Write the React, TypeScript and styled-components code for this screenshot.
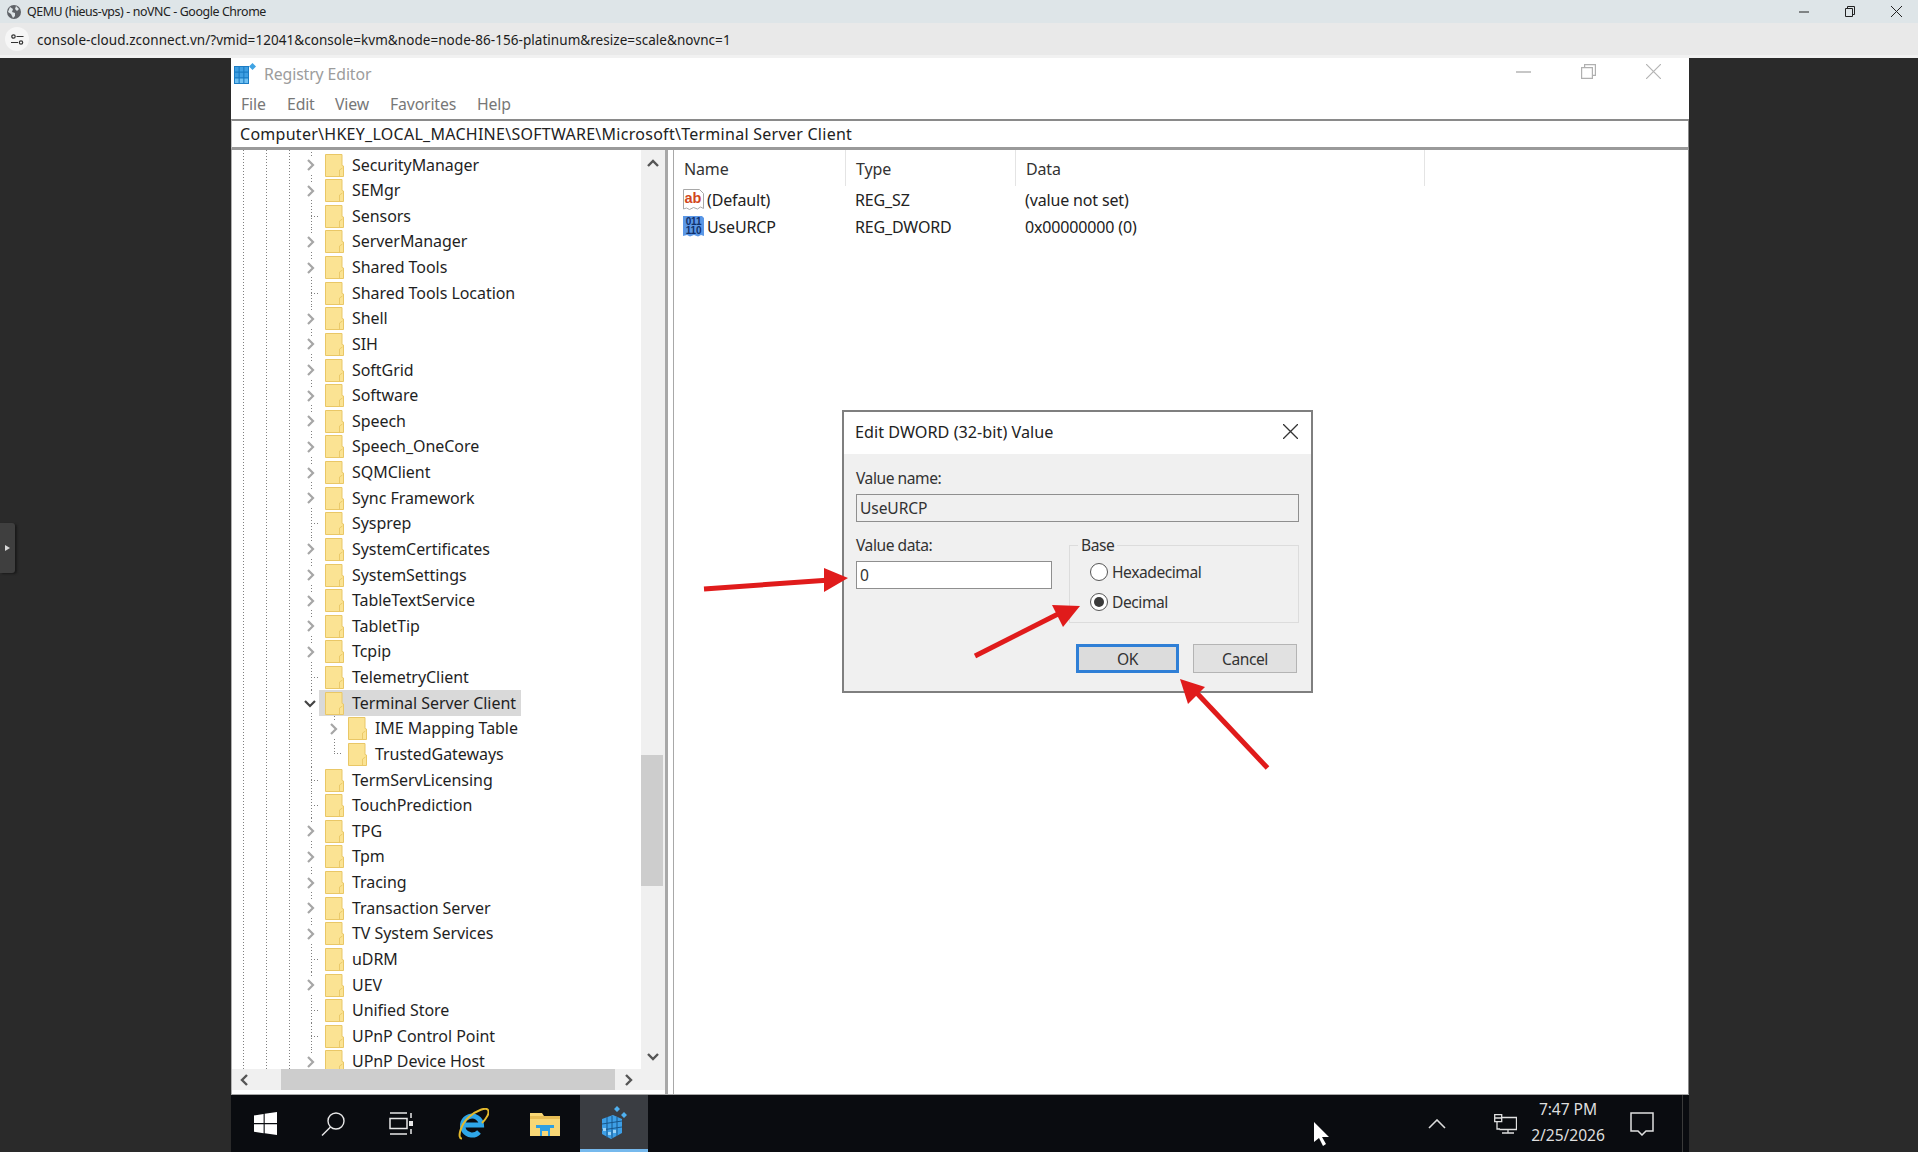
import React from "react";
import styled, { createGlobalStyle } from "styled-components";

const GlobalStyle = createGlobalStyle`
  html, body { margin: 0; padding: 0; background: #2a2a2a; }
  * { box-sizing: border-box; }
  #root { width: 1918px; height: 1152px; }
`;

const UI_FONT = `"Noto Sans", "Open Sans", Arial, sans-serif`;

const Page = styled.div`
  width: 1918px;
  height: 1152px;
  display: flex;
  flex-direction: column;
  overflow: hidden;
  font-family: ${UI_FONT};
  color: #222;
`;

const ChromeTitle = styled.header`
  height: 23px;
  background: #dee5e8;
  display: flex;
  align-items: center;
  padding-left: 7px;
  flex: none;
`;
const ChromeTitleText = styled.span`
  margin-left: 6px;
  font-size: 12.4px;
  letter-spacing: -0.4px;
  color: #222;
  white-space: nowrap;
`;
const ChromeControls = styled.div`
  margin-left: auto;
  margin-right: -1px;
  display: flex;
  align-items: center;
  color: #222;
`;
const ChromeControl = styled.span`
  width: 46px;
  height: 23px;
  display: flex;
  align-items: center;
  justify-content: center;
`;
const ChromeAddress = styled.div`
  height: 35px;
  flex: none;
  background: #e9e9e9;
  border-bottom: 3px solid;
  border-image: linear-gradient(#a9a9a9 0 67%, #f1f1f1 67%) 1;
  display: flex;
  align-items: center;
  padding-left: 5px;
`;
const SiteBadge = styled.span`
  width: 24px;
  height: 24px;
  border-radius: 50%;
  background: #f6f6f6;
  display: flex;
  align-items: center;
  justify-content: center;
  flex: none;
`;
const UrlText = styled.span`
  margin-left: 8px;
  padding-top: 2px;
  font-size: 13.5px;
  letter-spacing: 0.05px;
  color: #1c1c1c;
  white-space: nowrap;
`;

const Desktop = styled.main`
  position: relative;
  flex: 1;
  min-height: 0;
  background: #2a2a2a;
  padding-left: 231px;
`;
const SideHandle = styled.div`
  position: absolute;
  left: 0;
  top: 465px;
  width: 15px;
  height: 50px;
  background: #3f3f3f;
  border-radius: 0 3px 3px 0;
  box-shadow: 2px 1px 2px #1a1a1a;
  display: flex;
  align-items: center;
  justify-content: center;
`;
const HandleArrow = styled.span`
  width: 0;
  height: 0;
  border-left: 5px solid #d8d8d8;
  border-top: 3px solid transparent;
  border-bottom: 3px solid transparent;
`;

const RegWindow = styled.section`
  width: 1458px;
  height: 100%;
  display: flex;
  flex-direction: column;
  background: #fff;
`;
const TitleRow = styled.div`
  height: 31px;
  flex: none;
  display: flex;
  align-items: center;
  padding-left: 3px;
`;
const WindowTitle = styled.span`
  margin-left: 8px;
  font-size: 15.8px;
  letter-spacing: -0.1px;
  color: #9c9c9c;
`;
const WindowControls = styled.div`
  margin-left: auto;
  display: flex;
  margin-right: 28px;
  margin-top: -4px;
  gap: 50px;
`;
const MenuRow = styled.nav`
  height: 30px;
  flex: none;
  display: flex;
  align-items: center;
  padding-left: 10px;
`;
const MenuItem = styled.span<{ $w: number }>`
  width: ${(p) => p.$w}px;
  font-size: 15.8px;
  letter-spacing: -0.15px;
  color: #777;
`;
const AddressBox = styled.div`
  height: 31px;
  flex: none;
  border-top: 2px solid #8a8a8a;
  border-bottom: 3px solid #9a9a9a;
  border-right: 1px solid #8a8a8a;
  border-left: 1px solid #c0c0c0;
  display: flex;
  align-items: center;
  padding-left: 8px;
  font-size: 16px;
  letter-spacing: 0.27px;
  color: #222;
  white-space: nowrap;
`;
const Panes = styled.div`
  flex: 1;
  min-height: 0;
  display: flex;
  border-bottom: 1px solid #a8a8a8;
`;
const TreePanel = styled.div`
  width: 437px;
  flex: none;
  display: flex;
  flex-direction: column;
  border-left: 1px solid #b0b0b0;
  border-right: 3px solid #a8a8a8;
  padding-bottom: 4px;
`;
const TreeBody = styled.div`
  flex: 1;
  min-height: 0;
  display: flex;
`;
const TreeList = styled.ul`
  flex: 1;
  min-width: 0;
  margin: 0;
  padding: 2.2px 0 0;
  list-style: none;
  overflow: hidden;
  background-image:
    repeating-linear-gradient(to bottom, #808080 0 1px, transparent 1px 3px),
    repeating-linear-gradient(to bottom, #808080 0 1px, transparent 1px 3px),
    repeating-linear-gradient(to bottom, #808080 0 1px, transparent 1px 3px);
  background-size: 1px 100%;
  background-repeat: no-repeat;
  background-position: 11px 0, 34px 0, 57px 0;
`;
const TreeRow = styled.li<{ $depth: number; $line: boolean }>`
  position: relative;
  height: 25.64px;
  display: flex;
  align-items: center;
  padding-left: ${(p) => 67 + p.$depth * 23}px;
  white-space: nowrap;
  ${(p) =>
    p.$line
      ? `&::before {
    content: "";
    position: absolute;
    left: 79px;
    top: 0;
    bottom: 0;
    width: 1px;
    background: repeating-linear-gradient(to bottom, #808080 0 1px, transparent 1px 3px);
  }`
      : ""}
`;
const Expander = styled.span`
  position: relative;
  width: 26px;
  height: 100%;
  flex: none;
  display: flex;
  align-items: center;
  justify-content: center;
  padding-right: 5px;
`;
const Stub = styled.span`
  position: absolute;
  left: 12px;
  top: 0;
  bottom: 0;
  width: 1px;
  background:
    linear-gradient(#808080 0 1px, transparent 1px 3px, #808080 3px 4px, transparent 4px) top / 1px 4px no-repeat,
    linear-gradient(#808080 0 1px, transparent 1px) bottom / 1px 3px no-repeat;
`;
const Connector = styled.span<{ $end?: boolean }>`
  position: absolute;
  left: 12px;
  top: 0;
  width: 9px;
  height: ${(p) => (p.$end ? "50%" : "100%")};
  background-image:
    repeating-linear-gradient(to bottom, #808080 0 1px, transparent 1px 3px),
    repeating-linear-gradient(to right, #808080 0 1px, transparent 1px 3px);
  background-repeat: no-repeat;
  background-size: 1px 100%, 100% 1px;
  background-position: 0 0, 0 ${(p) => (p.$end ? "100%" : "50%")};
`;
const TreeLabel = styled.span<{ $selected?: boolean }>`
  display: flex;
  align-items: center;
  gap: 8px;
  height: 100%;
  margin-left: -6px;
  padding: 0 5px 0 6px;
  background: ${(p) => (p.$selected ? "#d9d9d9" : "transparent")};
  font-size: 16px;
  letter-spacing: -0.05px;
  color: #1f1f1f;
`;
const TreeName = styled.span`
  padding-bottom: 1px;
`;
const VScroll = styled.div`
  width: 24px;
  flex: none;
  background: #f0f0f0;
  display: flex;
  flex-direction: column;
  align-items: center;
  color: #555;
`;
const ScrollBtn = styled.span<{ $h: number; $auto?: boolean }>`
  height: ${(p) => p.$h}px;
  flex: none;
  display: flex;
  align-items: center;
  justify-content: center;
  margin-top: ${(p) => (p.$auto ? "auto" : 0)};
`;
const VThumb = styled.div`
  width: 22px;
  height: 131px;
  margin-top: 577px;
  margin-right: 2px;
  background: #cdcdcd;
  flex: none;
`;
const HScroll = styled.div`
  height: 21px;
  flex: none;
  background: #f0f0f0;
  display: flex;
  align-items: center;
  color: #555;
`;
const HBtn = styled.span<{ $w: number; $pad: number }>`
  width: ${(p) => p.$w}px;
  padding-left: ${(p) => p.$pad}px;
  height: 100%;
  flex: none;
  display: flex;
  align-items: center;
`;
const HThumb = styled.div`
  width: 334px;
  height: 100%;
  flex: none;
  background: #cdcdcd;
`;
const ValuesPane = styled.div`
  flex: 1;
  min-width: 0;
  margin-left: 5px;
  border-left: 1px solid #a8a8a8;
  border-right: 1px solid #8a8a8a;
`;
const ValuesGrid = styled.div`
  display: grid;
  grid-template-columns: 172px 170px 409px;
  font-size: 16px;
  letter-spacing: -0.15px;
  color: #222;
`;
const HeadCell = styled.div`
  height: 36px;
  padding: 1px 0 0 10px;
  display: flex;
  align-items: center;
  color: #333;
  border-right: 1px solid #e4e4e4;
`;
const ValueCell = styled.div`
  height: 27px;
  padding-left: 9px;
  display: flex;
  align-items: center;
  gap: 3px;
`;

const Taskbar = styled.footer`
  position: relative;
  height: 57px;
  flex: none;
  background: #0a0c10;
  display: flex;
  align-items: stretch;
`;
const TaskButton = styled.span<{ $w: number; $active?: boolean }>`
  width: ${(p) => p.$w}px;
  flex: none;
  display: flex;
  align-items: center;
  justify-content: center;
  background: ${(p) => (p.$active ? "#3a3d42" : "transparent")};
  border-bottom: ${(p) => (p.$active ? "3px solid #76b9ed" : "0")};
`;
const Tray = styled.div`
  margin-left: auto;
  display: flex;
  align-items: center;
  padding-right: 6px;
  color: #e4e4e4;
`;
const TrayCell = styled.span<{ $w: number; $ml: number }>`
  width: ${(p) => p.$w}px;
  margin-left: ${(p) => p.$ml}px;
  flex: none;
  display: flex;
  align-items: center;
  justify-content: center;
`;
const Clock = styled.div`
  width: 84px;
  margin-left: 9px;
  margin-right: -3px;
  display: flex;
  flex-direction: column;
  align-items: center;
  gap: 6px;
  font-size: 15.6px;
  line-height: 20px;
  letter-spacing: -0.05px;
  color: #dedede;
  margin-top: -3px;
`;
const TrayDivider = styled.span`
  width: 1px;
  height: 100%;
  margin-left: 28px;
  background: #3a3a3a;
`;
const CursorMark = styled.svg`
  position: absolute;
  left: 1083px;
  top: 27px;
`;

const Dialog = styled.section`
  position: absolute;
  left: 842px;
  top: 352px;
  width: 471px;
  height: 283px;
  display: flex;
  flex-direction: column;
  border: 2px solid #7f7f7f;
  background: #f0f0f0;
  font-size: 15.6px;
  letter-spacing: -0.45px;
  color: #333;
`;
const DialogHead = styled.div`
  height: 42px;
  flex: none;
  background: #fff;
  display: flex;
  align-items: center;
  padding: 0 0 2px 11px;
  color: #222;
  font-size: 16.2px;
  letter-spacing: 0.02px;
`;
const DialogClose = styled.span`
  margin-left: auto;
  margin-right: 13px;
  margin-top: -2px;
  display: flex;
`;
const DialogBody = styled.div`
  padding: 14px 12px 0;
  display: flex;
  flex-direction: column;
`;
const FieldLabel = styled.label`
  display: block;
  height: 20px;
  line-height: 20px;
  margin-bottom: 6px;
`;
const TextBox = styled.div<{ $disabled?: boolean; $w?: number }>`
  height: 28px;
  width: ${(p) => (p.$w ? `${p.$w}px` : "100%")};
  border: 1.5px solid #8f8f8f;
  background: ${(p) => (p.$disabled ? "#f0f0f0" : "#fff")};
  display: flex;
  align-items: center;
  padding-left: 3px;
  letter-spacing: -0.1px;
`;
const LowerRow = styled.div`
  margin-top: 13px;
  display: grid;
  grid-template-columns: 213px 230px;
`;
const BaseGroup = styled.fieldset`
  margin: 0;
  padding: 2px 0 0 20px;
  height: 88px;
  border: 1px solid #dcdcdc;
`;
const BaseLegend = styled.legend`
  margin-left: -12px;
  padding: 0 3px;
  height: 20px;
  line-height: 20px;
`;
const RadioRow = styled.div`
  height: 30px;
  display: flex;
  align-items: center;
  gap: 4px;
`;
const RadioDot = styled.span<{ $on?: boolean }>`
  width: 18px;
  height: 18px;
  border-radius: 50%;
  border: 1.5px solid #555;
  background: #fff;
  display: flex;
  align-items: center;
  justify-content: center;
  &::after {
    content: "";
    width: 10px;
    height: 10px;
    border-radius: 50%;
    background: ${(p) => (p.$on ? "#3a3a3a" : "transparent")};
  }
`;
const ButtonRow = styled.div`
  margin-top: 21px;
  margin-right: 2px;
  display: flex;
  justify-content: flex-end;
  gap: 14px;
`;
const DialogButton = styled.div<{ $primary?: boolean }>`
  width: ${(p) => (p.$primary ? 103 : 104)}px;
  height: 29px;
  display: flex;
  align-items: center;
  justify-content: center;
  background: ${(p) => (p.$primary ? "#dcdcdc" : "#e1e1e1")};
  border: ${(p) => (p.$primary ? "3px solid #2f7fd6" : "1.5px solid #b4b4b4")};
`;
const ArrowLayer = styled.svg`
  position: absolute;
  left: 0;
  top: 0;
  pointer-events: none;
`;

type Node = { n: string; leaf?: boolean; depth?: number; sel?: boolean; open?: boolean; end?: boolean };
const nodes: Node[] = [
  { n: "SecurityManager" }, { n: "SEMgr" }, { n: "Sensors", leaf: true }, { n: "ServerManager" }, { n: "Shared Tools" },
  { n: "Shared Tools Location", leaf: true }, { n: "Shell" }, { n: "SIH" }, { n: "SoftGrid" }, { n: "Software" },
  { n: "Speech" }, { n: "Speech_OneCore" }, { n: "SQMClient" }, { n: "Sync Framework" }, { n: "Sysprep", leaf: true },
  { n: "SystemCertificates" }, { n: "SystemSettings" }, { n: "TableTextService" }, { n: "TabletTip" }, { n: "Tcpip" },
  { n: "TelemetryClient", leaf: true }, { n: "Terminal Server Client", sel: true, open: true },
  { n: "IME Mapping Table", depth: 1 }, { n: "TrustedGateways", depth: 1, leaf: true, end: true },
  { n: "TermServLicensing", leaf: true }, { n: "TouchPrediction", leaf: true }, { n: "TPG" }, { n: "Tpm" }, { n: "Tracing" },
  { n: "Transaction Server" }, { n: "TV System Services" }, { n: "uDRM", leaf: true }, { n: "UEV" },
  { n: "Unified Store", leaf: true }, { n: "UPnP Control Point", leaf: true }, { n: "UPnP Device Host" },
];

const Folder = () => (
  <svg width="19" height="23" viewBox="0 0 19 23" style={{ flex: "none" }}>
    <path d="M.5.5h16.5v11l1.5.5v10.5H.5z" fill="#fbe393" stroke="#e9c766" />
    <path d="M14.5 22v-6l3-2" fill="none" stroke="#e9c766" strokeWidth=".9" />
  </svg>
);

const Chevron = ({ dir, color = "#a6a6a6", size = 12, width = 2.2 }: { dir: "r" | "l" | "u" | "d"; color?: string; size?: number; width?: number }) => {
  const paths = { r: "M4 1l5 5-5 5", l: "M8 1L3 6l5 5", u: "M1 8l5-5 5 5", d: "M1 4l5 5 5-5" };
  return (
    <svg width={size} height={size} viewBox="0 0 12 12" fill="none" stroke={color} strokeWidth={width}>
      <path d={paths[dir]} />
    </svg>
  );
};

const RegIcon = () => (
  <svg width="22" height="23" viewBox="0 0 22 23" style={{ flex: "none" }}>
    <path d="M0 4h15v18H0z" fill="#1b7cc4" />
    <g fill="#3f9fe2">
      <path d="M1 5h3.6v4.6H1zM5.7 5h3.6v4.6H5.7zM10.4 5H14v4.6h-3.6zM1 10.7h3.6v4.6H1zM5.7 10.7h3.6v4.6H5.7zM10.4 10.7H14v4.6h-3.6z" />
    </g>
    <g fill="#6fc0f2">
      <path d="M1 16.4h3.6V21H1zM5.7 16.4h3.6V21H5.7zM10.4 16.4H14V21h-3.6z" />
    </g>
    <path d="M18.5 1l3.5 3.5-3.5 3.5L15 4.5z" fill="#3fa3e3" />
  </svg>
);

const AbIcon = () => (
  <svg width="21" height="23" viewBox="0 0 21 23" style={{ flex: "none" }}>
    <path d="M.5 1.5h16l4 4v15l-3-1.5-3 2-4-1.5-4 2-3-1.5-3 1z" fill="#fff" stroke="#a8a8a8" />
    <text x="1.5" y="14.5" fontFamily="Liberation Sans, sans-serif" fontWeight="700" fontSize="14.5" fill="#d2481c">ab</text>
  </svg>
);

const BinIcon = () => (
  <svg width="21" height="23" viewBox="0 0 21 23" style={{ flex: "none" }}>
    <path d="M0 1h19l2 2v18l-3-1-3 1.5-4-1.5-4 1.5-3-1.5-4 1z" fill="#5b97e6" />
    <g fill="#10306a" fontFamily="Liberation Sans, sans-serif" fontWeight="700" fontSize="10" textAnchor="middle">
      <text x="10.5" y="9.5">011</text>
      <text x="10.5" y="18.5">110</text>
    </g>
  </svg>
);

const Arrows = () => (
  <ArrowLayer width="1918" height="1094" viewBox="0 58 1918 1094">
    <g stroke="#e01b1b" strokeWidth="5" fill="#e01b1b">
      <path d="M704 589L830 580" fill="none" />
      <polygon points="848,578 824,568 824,592" stroke="none" />
      <path d="M975 656L1062 612" fill="none" />
      <polygon points="1080,606 1052,605 1063,627" stroke="none" />
      <path d="M1267.5 768L1194 690" fill="none" />
      <polygon points="1180,679 1205,687 1188,704" stroke="none" />
    </g>
  </ArrowLayer>
);

export default function App() {
  return (
    <Page>
      <GlobalStyle />
      <ChromeTitle>
        <svg width="14" height="14" viewBox="0 0 14 14">
          <circle cx="7" cy="7" r="7" fill="#5f6368" />
          <path d="M3 2l3 2-1 3 3 1v3l-2 2-2-4-3-2zM9 1l3 3-2 2-2-2z" fill="#dee5e8" />
        </svg>
        <ChromeTitleText>QEMU (hieus-vps) - noVNC - Google Chrome</ChromeTitleText>
        <ChromeControls>
          <ChromeControl>
            <svg width="10" height="10" viewBox="0 0 10 10"><path d="M0 5h10" stroke="#222" /></svg>
          </ChromeControl>
          <ChromeControl>
            <svg width="10" height="11" viewBox="0 0 10 11" fill="none" stroke="#222"><path d="M.5 2.5h7v8h-7zM2.5 2.5v-2h7v8h-2" /></svg>
          </ChromeControl>
          <ChromeControl>
            <svg width="11" height="11" viewBox="0 0 11 11"><path d="M0 0l11 11M11 0L0 11" stroke="#222" /></svg>
          </ChromeControl>
        </ChromeControls>
      </ChromeTitle>
      <ChromeAddress>
        <SiteBadge>
          <svg width="13" height="11" viewBox="0 0 13 11" fill="none" stroke="#333" strokeWidth="1.2">
            <circle cx="2.5" cy="2.5" r="1.7" />
            <path d="M5.5 2.5h7M0 8.5h7" />
            <circle cx="10" cy="8.5" r="1.7" />
          </svg>
        </SiteBadge>
        <UrlText>console-cloud.zconnect.vn/?vmid=12041&amp;console=kvm&amp;node=node-86-156-platinum&amp;resize=scale&amp;novnc=1</UrlText>
      </ChromeAddress>

      <Desktop>
        <SideHandle><HandleArrow /></SideHandle>
        <RegWindow>
          <TitleRow>
            <RegIcon />
            <WindowTitle>Registry Editor</WindowTitle>
            <WindowControls>
              <svg width="15" height="15" viewBox="0 0 15 15"><path d="M0 8h15" stroke="#b4b4b4" strokeWidth="1.5" /></svg>
              <svg width="15" height="15" viewBox="0 0 15 15" fill="none" stroke="#b0b0b0" strokeWidth="1.2"><path d="M.6 3.6h10.8v10.8H.6zM3.6 3.5V.6h10.8v10.8h-3" /></svg>
              <svg width="15" height="15" viewBox="0 0 15 15"><path d="M0 0l15 15M15 0L0 15" stroke="#b4b4b4" strokeWidth="1.2" /></svg>
            </WindowControls>
          </TitleRow>
          <MenuRow>
            <MenuItem $w={46}>File</MenuItem>
            <MenuItem $w={48}>Edit</MenuItem>
            <MenuItem $w={55}>View</MenuItem>
            <MenuItem $w={87}>Favorites</MenuItem>
            <MenuItem $w={40}>Help</MenuItem>
          </MenuRow>
          <AddressBox>Computer\HKEY_LOCAL_MACHINE\SOFTWARE\Microsoft\Terminal Server Client</AddressBox>
          <Panes>
            <TreePanel>
              <TreeBody>
                <TreeList>
                  {nodes.map((node) => (
                    <TreeRow key={node.n} $depth={node.depth ?? 0} $line={node.depth === 1}>
                      <Expander>
                        {node.leaf ? <Connector $end={node.end} /> : <Stub />}
                        {!node.leaf && <Chevron dir={node.open ? "d" : "r"} color={node.open ? "#444" : "#a6a6a6"} />}
                      </Expander>
                      <TreeLabel $selected={node.sel}>
                        <Folder />
                        <TreeName>{node.n}</TreeName>
                      </TreeLabel>
                    </TreeRow>
                  ))}
                </TreeList>
                <VScroll>
                  <ScrollBtn $h={28}><Chevron dir="u" color="#555" width={2.4} /></ScrollBtn>
                  <VThumb />
                  <ScrollBtn $h={26} $auto><Chevron dir="d" color="#555" width={2.4} /></ScrollBtn>
                </VScroll>
              </TreeBody>
              <HScroll>
                <HBtn $w={49} $pad={7}><Chevron dir="l" color="#555" width={2.4} /></HBtn>
                <HThumb />
                <HBtn $w={25} $pad={7}><Chevron dir="r" color="#555" width={2.4} /></HBtn>
              </HScroll>
            </TreePanel>
            <ValuesPane>
              <ValuesGrid>
                <HeadCell>Name</HeadCell>
                <HeadCell>Type</HeadCell>
                <HeadCell>Data</HeadCell>
                <ValueCell><AbIcon />(Default)</ValueCell>
                <ValueCell>REG_SZ</ValueCell>
                <ValueCell>(value not set)</ValueCell>
                <ValueCell><BinIcon />UseURCP</ValueCell>
                <ValueCell>REG_DWORD</ValueCell>
                <ValueCell>0x00000000 (0)</ValueCell>
              </ValuesGrid>
            </ValuesPane>
          </Panes>
          <Taskbar>
            <TaskButton $w={68}>
              <svg width="23" height="23" viewBox="0 0 23 23" fill="#fff"><path d="M0 3.4L9.6 2v9H0zM10.7 1.8L23 0v11H10.7zM0 12.2h9.6v9L0 19.8zM10.7 12.2H23V23l-12.3-1.8z" /></svg>
            </TaskButton>
            <TaskButton $w={68}>
              <svg width="24" height="24" viewBox="0 0 24 24" fill="none" stroke="#e8e8e8" strokeWidth="1.4"><circle cx="15" cy="9" r="8" /><path d="M9.5 15L1 23.5" /></svg>
            </TaskButton>
            <TaskButton $w={68}>
              <svg width="24" height="23" viewBox="0 0 24 23" fill="none" stroke="#e8e8e8" strokeWidth="1.5">
                <path d="M1 1h17M1 22h17M1 6.5h17v10H1z" />
                <path d="M22 1v5M22 17v5" />
                <path d="M20 9h4v5h-4z" fill="#e8e8e8" stroke="none" />
              </svg>
            </TaskButton>
            <TaskButton $w={75}>
              <svg width="32" height="32" viewBox="0 0 32 32">
                <path d="M4 17h20.5A9.5 9.5 0 1 0 22 24" fill="none" stroke="#2ea6e8" strokeWidth="5" />
                <path d="M5 30.5C0 31 3 17 12 9 20 2 29-1 31 2c2 3-2 9-6 13" fill="none" stroke="#e3b92c" strokeWidth="2" />
              </svg>
            </TaskButton>
            <TaskButton $w={70}>
              <svg width="30" height="25" viewBox="0 0 30 25">
                <path d="M0 2h12l2 3h16v20H0z" fill="#f8d775" />
                <path d="M0 5h30v3H0z" fill="#e7bd55" />
                <path d="M6 14h18v3h-4v8H10v-8H6z" fill="#2f9fe2" />
                <path d="M12 20h6v5h-6z" fill="#f8d775" />
              </svg>
            </TaskButton>
            <TaskButton $w={68} $active>
              <svg width="27" height="33" viewBox="0 0 27 33">
                <path d="M1 13l11-4 9 4v14l-11 6-9-5z" fill="#3d9fe6" />
                <path d="M13 3l3-3 3 3-3 3zM20 9l3-3 3 3-3 3z" fill="#4fb0ef" />
                <path d="M6 11v21M11 10v22M16 11v19M1 18l20-3M1 24l20-3" stroke="#17578c" strokeWidth="1" fill="none" />
                <path d="M7 26h3v3H7zM12 24h3v3h-3zM2 22h3v3H2z" fill="#9ad4f8" />
              </svg>
            </TaskButton>
            <Tray>
              <TrayCell $w={54} $ml={0}>
                <svg width="18" height="10" viewBox="0 0 18 10" fill="none" stroke="#dcdcdc" strokeWidth="1.6"><path d="M1 9l8-8 8 8" /></svg>
              </TrayCell>
              <TrayCell $w={24} $ml={29}>
                <svg width="23" height="20" viewBox="0 0 23 20" fill="none" stroke="#e0e0e0" strokeWidth="1.3">
                  <path d="M5 3.5h17.5v12H5.5M14 15.5v3M8 19h12" />
                  <path d="M.7.7h7v7h-7zM.7 4h7M3 8v7h3" fill="#0a0c10" />
                </svg>
              </TrayCell>
              <Clock>
                <span>7:47 PM</span>
                <span>2/25/2026</span>
              </Clock>
              <TrayCell $w={24} $ml={23}>
                <svg width="24" height="24" viewBox="0 0 24 24" fill="none" stroke="#e0e0e0" strokeWidth="1.5"><path d="M1 1h22v18h-7l-4 4-4-4H1z" /></svg>
              </TrayCell>
              <TrayDivider />
            </Tray>
            <CursorMark width="15" height="24" viewBox="0 0 15 24">
              <path d="M0 0v20l5-4 4 8 3-2-4-7h7z" fill="#fff" />
            </CursorMark>
          </Taskbar>
        </RegWindow>
        <Dialog>
          <DialogHead>
            Edit DWORD (32-bit) Value
            <DialogClose>
              <svg width="15" height="15" viewBox="0 0 15 15"><path d="M0 0l15 15M15 0L0 15" stroke="#333" strokeWidth="1.3" /></svg>
            </DialogClose>
          </DialogHead>
          <DialogBody>
            <FieldLabel>Value name:</FieldLabel>
            <TextBox $disabled>UseURCP</TextBox>
            <LowerRow>
              <div>
                <FieldLabel>Value data:</FieldLabel>
                <TextBox $w={196}>0</TextBox>
              </div>
              <BaseGroup>
                <BaseLegend>Base</BaseLegend>
                <RadioRow><RadioDot />Hexadecimal</RadioRow>
                <RadioRow><RadioDot $on />Decimal</RadioRow>
              </BaseGroup>
            </LowerRow>
            <ButtonRow>
              <DialogButton $primary>OK</DialogButton>
              <DialogButton>Cancel</DialogButton>
            </ButtonRow>
          </DialogBody>
        </Dialog>
        <Arrows />
      </Desktop>
    </Page>
  );
}
